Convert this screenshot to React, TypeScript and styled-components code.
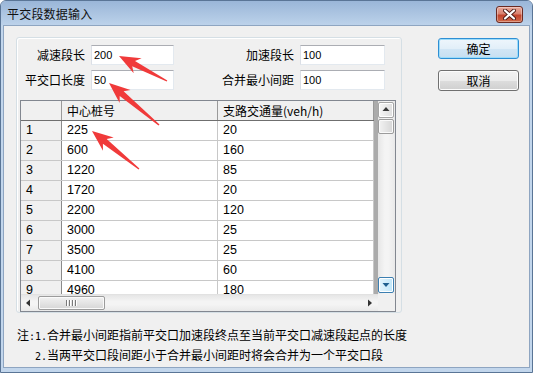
import styled, { createGlobalStyle } from "styled-components";

const rows: [string, string][] = [
  ["225", "20"],
  ["600", "160"],
  ["1220", "85"],
  ["1720", "20"],
  ["2200", "120"],
  ["3000", "25"],
  ["3500", "25"],
  ["4100", "60"],
  ["4960", "180"],
];

const arrows = [
  { x1: 167, y1: 81, x2: 119, y2: 56 },
  { x1: 159, y1: 125, x2: 109, y2: 83 },
  { x1: 139, y1: 169, x2: 92, y2: 131 },
];

// red annotation arrow: thin tail, widening, notched head
const arrowPoints = (x1: number, y1: number, x2: number, y2: number) => {
  const dx = x2 - x1;
  const dy = y2 - y1;
  const len = Math.hypot(dx, dy);
  const ux = dx / len;
  const uy = dy / len;
  const nx = -uy;
  const ny = ux;
  const head = 21;
  const wing = 8.5;
  const bx = x2 - ux * head;
  const by = y2 - uy * head;
  const nbx = bx + ux * 4.5;
  const nby = by + uy * 4.5;
  const p = (x: number, y: number) => `${x.toFixed(1)},${y.toFixed(1)}`;
  return [
    p(x1 + nx * 0.7, y1 + ny * 0.7),
    p(nbx + nx * 3, nby + ny * 3),
    p(bx + nx * wing, by + ny * wing),
    p(x2, y2),
    p(bx - nx * wing, by - ny * wing),
    p(nbx - nx * 3, nby - ny * 3),
    p(x1 - nx * 0.7, y1 - ny * 0.7),
  ].join(" ");
};

const GlobalStyle = createGlobalStyle`
  html, body { margin: 0; padding: 0; background: #ffffff; }
  body { font-family: "Noto Sans CJK SC", "Liberation Sans", sans-serif; }
  * { box-sizing: border-box; }
`;

const Stage = styled.div`
  position: relative;
  width: 533px;
  height: 373px;
`;

const Window = styled.div`
  width: 533px;
  height: 373px;
  display: flex;
  flex-direction: column;
  border: 1px solid #5a7596;
  border-radius: 6px 6px 0 0;
  background: #c2d6ec;
  overflow: hidden;
`;

const TitleBar = styled.div`
  height: 24px;
  flex: none;
  display: flex;
  align-items: center;
  padding: 0 9px 0 6px;
  background: linear-gradient(#9ab6d8, #bcd2ea);
`;

const Title = styled.span`
  font-size: 12px;
  color: #111;
  letter-spacing: 0.2px;
`;

const CloseButton = styled.div`
  margin-left: auto;
  margin-top: 2px;
  width: 27px;
  height: 17px;
  border: 1px solid #6b2a22;
  border-radius: 3px;
  display: flex;
  align-items: center;
  justify-content: center;
  background: linear-gradient(#e9a99b 0%, #d9826f 45%, #c2432c 55%, #cf6a4a 100%);
  box-shadow: inset 0 0 0 1px rgba(255, 255, 255, 0.35);
`;

const Client = styled.div`
  flex: 1;
  margin: 0 2px 4px 2px;
  border: 1px solid #8ea5c1;
  background: #f0f0f0;
  display: flex;
  padding: 11px 9px 0 12px;
  gap: 36px;
`;

const LeftPane = styled.div`
  width: 386px;
  display: flex;
  flex-direction: column;
`;

const GroupBox = styled.div`
  border: 1px solid #d5dfe5;
  border-radius: 3px;
  box-shadow: inset 1px 1px 0 #ffffff;
  padding: 7px 0 0 0;
  height: 276px;
`;

const FormGrid = styled.div`
  display: grid;
  grid-template-columns: 68px 83px 1fr 85px;
  grid-auto-rows: 20px;
  column-gap: 6px;
  row-gap: 5px;
  padding-right: 16px;
`;

const FieldLabel = styled.label`
  font-size: 12px;
  color: #000;
  text-align: right;
  line-height: 20px;
  white-space: nowrap;
`;

const TextInput = styled.input`
  height: 20px;
  width: 100%;
  border: 1px solid #e3e9ef;
  border-top-color: #abadb3;
  border-left-color: #dbdfe6;
  background: #fff;
  font-family: "Liberation Sans", sans-serif;
  font-size: 11px;
  padding: 0 2px;
  color: #000;
  outline: none;
`;

const TableFrame = styled.div`
  margin: 10px 0 0 3px;
  width: 376px;
  height: 212px;
  border: 1px solid #828790;
  background: #fff;
  display: grid;
  grid-template-columns: 1fr 17px;
  grid-template-rows: 1fr 17px;
`;

const Body = styled.div`
  overflow: hidden;
  background: #ababab;
`;

const GridRow = styled.div<{ $head?: boolean }>`
  display: grid;
  grid-template-columns: 41px 156px 156px;
  height: 20px;
  border-bottom: 1px solid ${(p) => (p.$head ? "#6f6f6f" : "#c8c8c8")};
  background: ${(p) => (p.$head ? "#f0f0f0" : "#fff")};
  width: 353px;
`;

const Cell = styled.div<{ $kind?: "index" | "head" | "data" }>`
  font-family: "Liberation Sans", "Noto Sans CJK SC", sans-serif;
  font-size: ${(p) => (p.$kind === "head" ? "12px" : "12.5px")};
  line-height: 19px;
  padding-left: 5px;
  white-space: nowrap;
  overflow: hidden;
  color: #000;
  background: ${(p) => (p.$kind === "data" ? "#fff" : "#f0f0f0")};
  border-right: 1px solid
    ${(p) => (p.$kind === "index" ? "#8a8a8a" : p.$kind === "head" ? "#9a9a9a" : "#c8c8c8")};
`;

const HeadText = styled.span`
  font-family: "Noto Sans CJK SC", sans-serif;
`;

const VScroll = styled.div`
  background: linear-gradient(90deg, #e6e6e6, #f4f4f4 40%, #f4f4f4 60%, #e9e9e9);
  display: flex;
  flex-direction: column;
  padding: 1px 0;
`;

const HScroll = styled.div`
  background: linear-gradient(#e6e6e6, #f4f4f4 40%, #f4f4f4 60%, #e9e9e9);
  display: flex;
  align-items: center;
  border-top: 1px solid #e2e2e2;
`;

const Corner = styled.div`
  background: #f0f0f0;
`;

const ScrollButton = styled.div<{ $state?: "plain" | "framed" | "hot" }>`
  width: 16px;
  height: 16px;
  flex: none;
  display: flex;
  align-items: center;
  justify-content: center;
  border-radius: 2px;
  border: 1px solid
    ${(p) => (p.$state === "hot" ? "#3c7fb1" : p.$state === "framed" ? "#a5a5a5" : "transparent")};
  background: ${(p) =>
    p.$state === "hot"
      ? "linear-gradient(90deg, #e3f4fc, #bfe6f9)"
      : p.$state === "framed"
      ? "linear-gradient(90deg, #f6f6f6, #dedede)"
      : "transparent"};
  box-shadow: ${(p) => (p.$state === "plain" ? "none" : "inset 0 0 0 1px #ffffff")};
`;

const Thumb = styled.div<{ $vertical?: boolean }>`
  border: 1px solid #9b9b9b;
  border-radius: 2px;
  box-shadow: inset 0 0 0 1px #fafafa;
  background: ${(p) =>
    p.$vertical
      ? "linear-gradient(90deg, #f2f2f2, #e4e4e4 50%, #d6d6d6)"
      : "linear-gradient(#f2f2f2, #e4e4e4 50%, #d6d6d6)"};
  display: flex;
  align-items: center;
  justify-content: center;
  gap: 1px;
  ${(p) =>
    p.$vertical
      ? "width: 16px; height: 15px; margin: 1px 0 0 0;"
      : "width: 67px; height: 14px; margin-left: 1px;"}
`;

const Grip = styled.span`
  width: 1px;
  height: 6px;
  background: #7a7a7a;
  box-shadow: 1px 0 0 #ffffff;
  margin-right: 1px;
`;

const Spacer = styled.div`
  flex: 1;
`;

const Notes = styled.div`
  margin-top: 13px;
  padding-left: 1px;
  font-family: "DejaVu Sans Mono", "Noto Sans CJK SC", monospace;
  font-size: 10px;
  line-height: 18px;
  color: #000;
`;

const NoteLine = styled.div<{ $indent?: boolean }>`
  padding-left: ${(p) => (p.$indent ? "18px" : "0")};
  white-space: nowrap;
  font-size: 10px;
  & > b {
    font-weight: normal;
    font-size: 12px;
    font-family: "Noto Sans CJK SC", sans-serif;
  }
`;

const ButtonColumn = styled.div`
  display: flex;
  flex-direction: column;
  gap: 11px;
  padding-top: 1px;
`;

const DialogButton = styled.button<{ $default?: boolean }>`
  width: 81px;
  height: 21px;
  border-radius: 3px;
  font-family: "Noto Sans CJK SC", sans-serif;
  font-size: 12px;
  color: #000;
  padding: 0;
  border: 1px solid ${(p) => (p.$default ? "#2e8fd4" : "#707070")};
  background: ${(p) =>
    p.$default
      ? "linear-gradient(#eef6fc, #e2eff9 50%, #d2e6f5 51%, #c7dff1)"
      : "linear-gradient(#f2f2f2, #ebebeb 50%, #dddddd 51%, #cfcfcf)"};
  box-shadow: inset 0 0 0 1px ${(p) => (p.$default ? "#9ddcfa" : "#fcfcfc")};
`;

const Overlay = styled.svg`
  position: absolute;
  left: 0;
  top: 0;
  pointer-events: none;
`;

const Tri = ({ dir, color = "#222" }: { dir: "up" | "down" | "left" | "right"; color?: string }) => {
  const pts = {
    up: "0.5,5 4,1 7.5,5",
    down: "0.5,2 4,6 7.5,2",
    left: "5,0.5 1,4 5,7.5",
    right: "2,0.5 6,4 2,7.5",
  }[dir];
  return (
    <svg width="8" height="8" viewBox="0 0 8 8">
      <polygon points={pts} fill={color} />
    </svg>
  );
};

const App = () => {
  return (
    <Stage>
      <GlobalStyle />
      <Window>
        <TitleBar>
          <Title>平交段数据输入</Title>
          <CloseButton>
            <svg width="13" height="11" viewBox="0 0 13 11">
              <path d="M2 1.5 L11 9.5 M11 1.5 L2 9.5" stroke="#4a1a14" strokeWidth="4" strokeLinecap="round" />
              <path d="M2 1.5 L11 9.5 M11 1.5 L2 9.5" stroke="#ffffff" strokeWidth="2.2" strokeLinecap="round" />
            </svg>
          </CloseButton>
        </TitleBar>
        <Client>
          <LeftPane>
            <GroupBox>
              <FormGrid>
                <FieldLabel>减速段长</FieldLabel>
                <TextInput defaultValue="200" />
                <FieldLabel>加速段长</FieldLabel>
                <TextInput defaultValue="100" />
                <FieldLabel>平交口长度</FieldLabel>
                <TextInput defaultValue="50" />
                <FieldLabel>合并最小间距</FieldLabel>
                <TextInput defaultValue="100" />
              </FormGrid>
              <TableFrame>
                <Body>
                  <GridRow $head>
                    <Cell $kind="head" />
                    <Cell $kind="head">
                      <HeadText>中心桩号</HeadText>
                    </Cell>
                    <Cell $kind="head">
                      <HeadText>支路交通量(veh/h)</HeadText>
                    </Cell>
                  </GridRow>
                  {rows.map(([station, volume], i) => (
                    <GridRow key={i}>
                      <Cell $kind="index">{i + 1}</Cell>
                      <Cell $kind="data">{station}</Cell>
                      <Cell $kind="data">{volume}</Cell>
                    </GridRow>
                  ))}
                </Body>
                <VScroll>
                  <ScrollButton $state="framed">
                    <Tri dir="up" color="#3a3a3a" />
                  </ScrollButton>
                  <Thumb $vertical />
                  <Spacer />
                  <ScrollButton $state="hot">
                    <Tri dir="down" color="#1f5f8f" />
                  </ScrollButton>
                </VScroll>
                <HScroll>
                  <ScrollButton $state="plain">
                    <Tri dir="left" color="#333" />
                  </ScrollButton>
                  <Thumb>
                    <Grip />
                    <Grip />
                    <Grip />
                    <Grip />
                  </Thumb>
                  <Spacer />
                  <ScrollButton $state="plain">
                    <Tri dir="right" color="#333" />
                  </ScrollButton>
                </HScroll>
                <Corner />
              </TableFrame>
            </GroupBox>
            <Notes>
              <NoteLine>
                <b>注</b>:1.<b>合并最小间距指前平交口加速段终点至当前平交口减速段起点的长度</b>
              </NoteLine>
              <NoteLine $indent>
                2.<b>当两平交口段间距小于合并最小间距时将会合并为一个平交口段</b>
              </NoteLine>
            </Notes>
          </LeftPane>
          <ButtonColumn>
            <DialogButton $default>确定</DialogButton>
            <DialogButton>取消</DialogButton>
          </ButtonColumn>
        </Client>
      </Window>
      <Overlay width="533" height="373" viewBox="0 0 533 373">
        {arrows.map((a, i) => (
          <polygon key={i} points={arrowPoints(a.x1, a.y1, a.x2, a.y2)} fill="#f03a3a" />
        ))}
      </Overlay>
    </Stage>
  );
};

export default App;
